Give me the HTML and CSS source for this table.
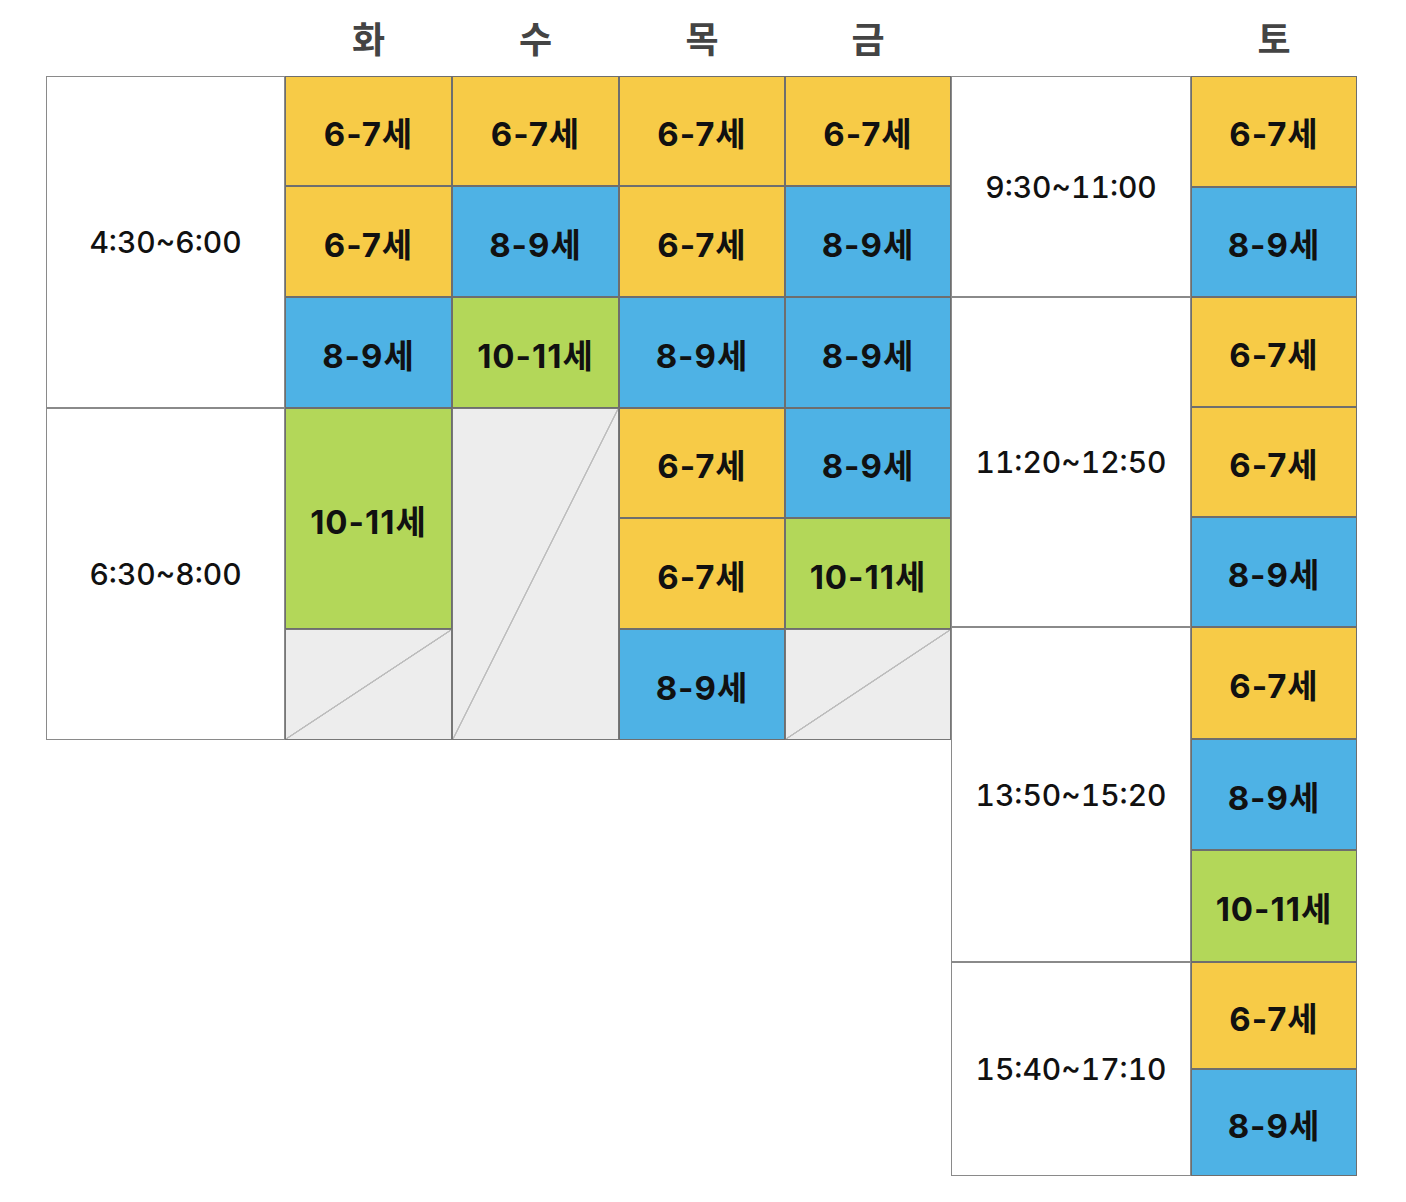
FILE: index.html
```html
<!DOCTYPE html>
<html lang="ko">
<head>
<meta charset="utf-8">
<title>시간표</title>
<link rel="stylesheet" href="styles.css">
</head>
<body>
<div class="page">
  <div class="days">
    <div class="day w-time"></div>
    <div class="day w167">화</div>
    <div class="day w167">수</div>
    <div class="day w166">목</div>
    <div class="day w166">금</div>
    <div class="day w-time2"></div>
    <div class="day w166">토</div>
  </div>
  <div class="board">
    <div class="left">
      <div class="time c1 r1-3">4:30~6:00</div>
      <div class="time c1 r4-6">6:30~8:00</div>

      <div class="cell y c2 r1">6-7세</div>
      <div class="cell y c2 r2">6-7세</div>
      <div class="cell b c2 r3">8-9세</div>
      <div class="cell g c2 r4-5">10-11세</div>
      <div class="cell e c2 r6"></div>

      <div class="cell y c3 r1">6-7세</div>
      <div class="cell b c3 r2">8-9세</div>
      <div class="cell g c3 r3">10-11세</div>
      <div class="cell e c3 r4-6"></div>

      <div class="cell y c4 r1">6-7세</div>
      <div class="cell y c4 r2">6-7세</div>
      <div class="cell b c4 r3">8-9세</div>
      <div class="cell y c4 r4">6-7세</div>
      <div class="cell y c4 r5">6-7세</div>
      <div class="cell b c4 r6">8-9세</div>

      <div class="cell y c5 r1">6-7세</div>
      <div class="cell b c5 r2">8-9세</div>
      <div class="cell b c5 r3">8-9세</div>
      <div class="cell b c5 r4">8-9세</div>
      <div class="cell g c5 r5">10-11세</div>
      <div class="cell e c5 r6"></div>
    </div>
    <div class="right">
      <div class="block h1">
        <div class="time tw">9:30~11:00</div>
        <div class="stack">
          <div class="cell y">6-7세</div>
          <div class="cell b">8-9세</div>
        </div>
      </div>
      <div class="block h2">
        <div class="time tw">11:20~12:50</div>
        <div class="stack">
          <div class="cell y">6-7세</div>
          <div class="cell y">6-7세</div>
          <div class="cell b">8-9세</div>
        </div>
      </div>
      <div class="block h3">
        <div class="time tw">13:50~15:20</div>
        <div class="stack">
          <div class="cell y">6-7세</div>
          <div class="cell b">8-9세</div>
          <div class="cell g">10-11세</div>
        </div>
      </div>
      <div class="block h4">
        <div class="time tw">15:40~17:10</div>
        <div class="stack">
          <div class="cell y">6-7세</div>
          <div class="cell b">8-9세</div>
        </div>
      </div>
    </div>
  </div>
</div>
</body>
</html>
```
FILE: styles.css
```css
* { box-sizing: border-box; }
html, body { margin: 0; padding: 0; background: #fff; }
body {
  font-family: Inter, "Noto Sans CJK KR", sans-serif;
  color: #111;
}
.page { padding-left: 46px; }

.days { display: flex; height: 76px; align-items: center; }
.day {
  font-family: "Noto Sans CJK KR", sans-serif;
  font-size: 36px;
  font-weight: 700;
  color: #444;
  text-align: center;
  line-height: 1;
  padding-bottom: 2px;
}
.w-time { width: 239px; }
.w-time2 { width: 240px; }
.w167 { width: 167px; }
.w166 { width: 166px; }

.board { display: flex; align-items: flex-start; }

.left {
  display: grid;
  grid-template-columns: 239px 167px 167px 166px 166px;
  grid-template-rows: 110px 111px 111px 110px 111px 111px;
  width: 905px;
}

.time {
  display: flex;
  align-items: center;
  justify-content: center;
  border: 1px solid #8a8a8a;
  font-size: 30px;
  font-weight: 500;
  font-variant-numeric: tabular-nums;
  background: #fff;
  color: #111;
}
.cell {
  display: flex;
  align-items: center;
  justify-content: center;
  border: 1px solid #6e6e6e;
  font-size: 33px;
  font-weight: 700;
  letter-spacing: 1px;
  color: #111;
  padding-top: 2px;
}
.y { background: #f7cb47; }
.b { background: #4eb2e5; }
.g { background: #b3d759; }
.e {
  background: linear-gradient(to bottom right,
    #ededed calc(50% - 1px), #bdbdbd calc(50% - 0.5px),
    #bdbdbd calc(50% + 0.5px), #ededed calc(50% + 1px));
  border-color: #777;
}

.c1 { grid-column: 1; }
.c2 { grid-column: 2; }
.c3 { grid-column: 3; }
.c4 { grid-column: 4; }
.c5 { grid-column: 5; }
.r1 { grid-row: 1; }
.r2 { grid-row: 2; }
.r3 { grid-row: 3; }
.r4 { grid-row: 4; }
.r5 { grid-row: 5; }
.r6 { grid-row: 6; }
.r1-3 { grid-row: 1 / 4; }
.r4-6 { grid-row: 4 / 7; }
.r4-5 { grid-row: 4 / 6; }

.right { display: flex; flex-direction: column; width: 406px; }
.block { display: flex; }
.h1 { height: 221px; }
.h2 { height: 330px; }
.h3 { height: 335px; }
.h4 { height: 214px; }
.tw { width: 240px; }
.stack { display: flex; flex-direction: column; width: 166px; }
.stack .cell { flex: 1; }
```
